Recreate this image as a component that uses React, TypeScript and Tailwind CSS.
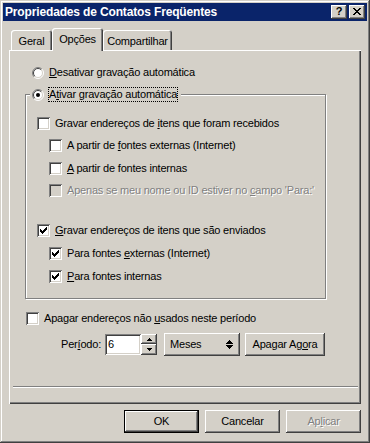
import React from 'react';

const RAISED =
  'shadow-[inset_-1px_-1px_#404040,inset_1px_1px_#ffffff,inset_-2px_-2px_#808080,inset_2px_2px_#d4d0c8]';
const SUNKEN =
  'shadow-[inset_1px_1px_#808080,inset_-1px_-1px_#ffffff,inset_2px_2px_#404040,inset_-2px_-2px_#d4d0c8]';

// classic 7x7 check mark, column tops
const CHECK_TOPS = [2, 3, 4, 3, 2, 1, 0];

function CheckBox({ checked = false, disabled = false }: { checked?: boolean; disabled?: boolean }) {
  return (
    <span
      className={`relative block w-[13px] h-[13px] shrink-0 ${SUNKEN} ${disabled ? 'bg-[#d4d0c8]' : 'bg-white'}`}
    >
      {checked && (
        <svg width="13" height="13" viewBox="0 0 13 13" className="absolute left-0 top-0" shapeRendering="crispEdges">
          {CHECK_TOPS.map((t, c) => (
            <rect key={c} x={3 + c} y={3 + t} width="1" height="3" fill="#000" />
          ))}
        </svg>
      )}
    </span>
  );
}

function Radio({ checked = false }: { checked?: boolean }) {
  return (
    <svg width="12" height="12" viewBox="0 0 12 12" className="shrink-0 block">
      <circle cx="6" cy="6" r="5" fill="#fff" />
      <path d="M2.1 9.9 A5.5 5.5 0 0 1 9.9 2.1" stroke="#808080" fill="none" />
      <path d="M9.9 2.1 A5.5 5.5 0 0 1 2.1 9.9" stroke="#ffffff" fill="none" />
      <path d="M2.8 9.2 A4.5 4.5 0 0 1 9.2 2.8" stroke="#404040" fill="none" />
      <path d="M9.2 2.8 A4.5 4.5 0 0 1 2.8 9.2" stroke="#d4d0c8" fill="none" />
      {checked && <circle cx="6" cy="6" r="2" fill="#000" />}
    </svg>
  );
}

function CheckRow({
  checked,
  disabled,
  className = '',
  children
}: {
  checked?: boolean;
  disabled?: boolean;
  className?: string;
  children: React.ReactNode;
}) {
  return (
    <div className={`flex items-center h-[13px] gap-[5px] ${className}`}>
      <CheckBox checked={checked} disabled={disabled} />
      <span
        className={`whitespace-nowrap leading-[13px] ${disabled ? 'text-[#808080] [text-shadow:1px_1px_0_#ffffff]' : ''}`}
      >
        {children}
      </span>
    </div>
  );
}

function Tab({ label, selected = false, width }: { label: string; selected?: boolean; width: string }) {
  if (selected) {
    return (
      <div
        className={`${width} h-[23px] -mb-px relative z-10 bg-[#d4d0c8] rounded-t-[3px] flex justify-center pt-[3px] shadow-[inset_1px_1px_#ffffff,inset_-1px_0_#404040,inset_-2px_0_#808080]`}
      >
        {label}
      </div>
    );
  }
  return (
    <div
      className={`${width} h-[20px] bg-[#d4d0c8] rounded-t-[3px] flex justify-center pt-[3px] shadow-[inset_1px_1px_#ffffff,inset_-1px_0_#404040,inset_-2px_0_#808080]`}
    >
      {label}
    </div>
  );
}

function Button({
  children,
  isDefault = false,
  disabled = false,
  className = ''
}: {
  children: React.ReactNode;
  isDefault?: boolean;
  disabled?: boolean;
  className?: string;
}) {
  const frame = isDefault
    ? 'shadow-[inset_0_0_0_1px_#000000,inset_-2px_-2px_#404040,inset_2px_2px_#ffffff,inset_-3px_-3px_#808080]'
    : RAISED;
  return (
    <div
      className={`h-[23px] flex items-center justify-center bg-[#d4d0c8] ${frame} ${
        disabled ? 'text-[#808080] [text-shadow:1px_1px_0_#ffffff]' : ''
      } ${className}`}
    >
      {children}
    </div>
  );
}

function CloseGlyph() {
  const rows = ['XX....XX', '.XX..XX.', '..XXXX..', '...XX...', '..XXXX..', '.XX..XX.', 'XX....XX'];
  return (
    <svg width="8" height="7" viewBox="0 0 8 7" shapeRendering="crispEdges">
      {rows.map((r, y) =>
        r.split('').map((ch, x) => (ch === 'X' ? <rect key={`${x}-${y}`} x={x} y={y} width="1" height="1" fill="#000" /> : null))
      )}
    </svg>
  );
}

export default function App() {
  return (
    <div
      className={`w-[370px] h-[443px] bg-[#d4d0c8] p-[3px] flex flex-col text-[11px] tracking-[-0.2px] text-black font-['Liberation_Sans',Arial,sans-serif] shadow-[inset_-1px_-1px_#404040,inset_1px_1px_#d4d0c8,inset_-2px_-2px_#808080,inset_2px_2px_#ffffff] select-none`}
    >
      {/* title bar */}
      <div className="h-[18px] bg-[#0a246a] flex items-center pl-[2px] pr-[2px]">
        <span className="text-white font-bold text-[12px] tracking-[-0.15px] flex-1 whitespace-nowrap">
          Propriedades de Contatos Freqüentes
        </span>
        <div className="flex gap-[2px]">
          <div className={`w-[16px] h-[14px] bg-[#d4d0c8] ${RAISED} flex items-center justify-center font-bold text-[11px] leading-none pb-[1px]`}>
            ?
          </div>
          <div className={`w-[16px] h-[14px] bg-[#d4d0c8] ${RAISED} flex items-center justify-center pb-[1px]`}>
            <CloseGlyph />
          </div>
        </div>
      </div>

      {/* tabs */}
      <div className="mx-[6px] mt-[7px] h-[22px] flex items-end pl-[2px]">
        <Tab label="Geral" width="w-[41px]" />
        <Tab label="Opções" width="w-[51px]" selected />
        <Tab label="Compartilhar" width="w-[69px]" />
      </div>

      {/* panel */}
      <div className="mx-[6px] h-[354px] pt-[16px] shadow-[inset_1px_1px_#ffffff,inset_-1px_-1px_#404040,inset_-2px_-2px_#808080]">
        <div className="flex items-center h-[13px] gap-[5px] ml-[23px]">
          <Radio />
          <span className="whitespace-nowrap">
            <u>D</u>esativar gravação automática
          </span>
        </div>

        {/* group box */}
        <div className="relative ml-[16px] mt-[15px] w-[301px] h-[205px] border border-[#808080] shadow-[inset_1px_1px_#ffffff,1px_1px_#ffffff] pt-[22px] pl-[11px]">
          <div className="absolute left-[4px] top-[-8px] h-[15px] flex items-center gap-[4px] bg-[#d4d0c8] pl-[2px] pr-[3px]">
            <Radio checked />
            <span className="whitespace-nowrap leading-[13px] px-[1px] outline outline-1 outline-dotted outline-black -outline-offset-1 py-[1px]">
              A<u>t</u>ivar gravação automática
            </span>
          </div>

          <CheckRow>
            Gravar endereços de <u>i</u>tens que foram recebidos
          </CheckRow>
          <CheckRow className="ml-[12px] mt-[9px]">
            A partir de <u>f</u>ontes externas (Internet)
          </CheckRow>
          <CheckRow className="ml-[12px] mt-[10px]">
            <u>A</u> partir de fontes internas
          </CheckRow>
          <CheckRow className="ml-[12px] mt-[9px]" disabled>
            Apenas se meu nome ou ID estiver no <u>c</u>ampo 'Para:'
          </CheckRow>

          <CheckRow className="mt-[27px]" checked>
            <u>G</u>ravar endereços de itens que são enviados
          </CheckRow>
          <CheckRow className="ml-[12px] mt-[10px]" checked>
            Para fontes <u>e</u>xternas (Internet)
          </CheckRow>
          <CheckRow className="ml-[12px] mt-[10px]" checked>
            <u>P</u>ara fontes internas
          </CheckRow>
        </div>

        <CheckRow className="ml-[17px] mt-[13px]">
          Apagar endereços não <u>u</u>sados neste período
        </CheckRow>

        {/* period row */}
        <div className="flex items-center h-[23px] mt-[8px]">
          <div className="w-[96px] text-right pr-[4px] whitespace-nowrap">
            Per<u>í</u>odo:
          </div>
          <div className={`w-[36px] h-[21px] bg-white ${SUNKEN} flex items-center pl-[3px]`}>6</div>
          <div className="w-[16px] h-[21px] flex flex-col">
            <div className={`h-[10px] bg-[#d4d0c8] ${RAISED} flex items-center justify-center`}>
              <svg width="5" height="3" viewBox="0 0 5 3" shapeRendering="crispEdges">
                <rect x="2" y="0" width="1" height="1" fill="#000" />
                <rect x="1" y="1" width="3" height="1" fill="#000" />
                <rect x="0" y="2" width="5" height="1" fill="#000" />
              </svg>
            </div>
            <div className={`h-[11px] bg-[#d4d0c8] ${RAISED} flex items-center justify-center`}>
              <svg width="5" height="3" viewBox="0 0 5 3" shapeRendering="crispEdges">
                <rect x="0" y="0" width="5" height="1" fill="#000" />
                <rect x="1" y="1" width="3" height="1" fill="#000" />
                <rect x="2" y="2" width="1" height="1" fill="#000" />
              </svg>
            </div>
          </div>
          <Button className="ml-[7px] w-[76px] !justify-between pl-[6px] pr-[7px]">
            <span>Meses</span>
            <svg width="7" height="9" viewBox="0 0 7 9" shapeRendering="crispEdges">
              <rect x="3" y="0" width="1" height="1" fill="#000" />
              <rect x="2" y="1" width="3" height="1" fill="#000" />
              <rect x="1" y="2" width="5" height="1" fill="#000" />
              <rect x="0" y="3" width="7" height="1" fill="#000" />
              <rect x="0" y="5" width="7" height="1" fill="#000" />
              <rect x="1" y="6" width="5" height="1" fill="#000" />
              <rect x="2" y="7" width="3" height="1" fill="#000" />
              <rect x="3" y="8" width="1" height="1" fill="#000" />
            </svg>
          </Button>
          <Button className="ml-[5px] w-[80px]">
            Apagar Ag<u>o</u>ra
          </Button>
        </div>

        {/* separator */}
        <div className="ml-[4px] w-[345px] mt-[30px] h-[2px] border-t border-[#808080] border-b border-b-white" />
      </div>

      {/* dialog buttons */}
      <div className="mt-[6px] flex justify-end gap-[6px] mr-[6px]">
        <Button isDefault className="w-[75px]">
          OK
        </Button>
        <Button className="w-[75px]">Cancelar</Button>
        <Button className="w-[75px]" disabled>
          Ap<u>l</u>icar
        </Button>
      </div>
    </div>
  );
}
